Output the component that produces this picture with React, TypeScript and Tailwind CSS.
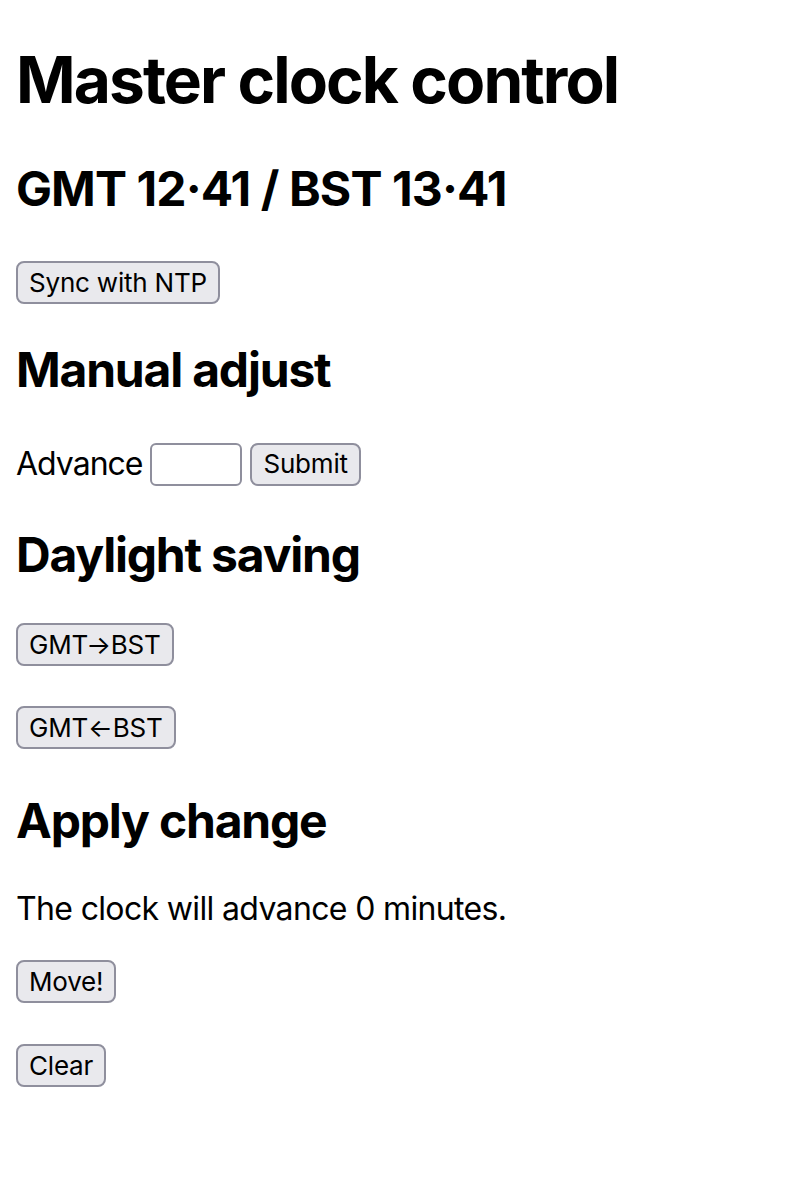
import React from 'react';

const font = { fontFamily: 'Inter, "Noto Sans", sans-serif' };

function Btn({ label, className = '' }: { label: string; className?: string }) {
  return (
    <button
      type="button"
      className={`h-[43px] px-[11px] border-2 border-[#8f8f9d] bg-[#e9e9ed] rounded-[8px] text-[26px] leading-none tracking-[-0.2px] text-black flex items-center ${className}`}
    >
      {label}
    </button>
  );
}

export default function App() {
  return (
    <div className="w-[800px] h-[1200px] bg-white text-black px-4 pt-[42px]" style={font}>
      <h1 className="text-[64px] leading-[76px] font-bold tracking-[-1.9px]">Master clock control</h1>
      <h2 className="mt-[42px] text-[48px] leading-[58px] font-bold tracking-[-0.9px]">GMT 12·41 / BST 13·41</h2>
      <div className="mt-[43px] flex">
        <Btn label="Sync with NTP" />
      </div>

      <h2 className="mt-[37px] text-[48px] leading-[58px] font-bold tracking-[-1.2px]">Manual adjust</h2>
      <div className="mt-[41px] flex items-center gap-[8px] text-[32px]">
        <span className="tracking-[-1px]">Advance</span>
        <input type="text" className="w-[92px] h-[43px] border-2 border-[#8f8f9d] rounded-[6px] bg-white" />
        <Btn label="Submit" />
      </div>

      <h2 className="mt-[38px] text-[48px] leading-[58px] font-bold tracking-[-1.2px]">Daylight saving</h2>
      <div className="mt-[39px] flex flex-col items-start gap-[40px]">
        <Btn label="GMT→BST" />
        <Btn label="GMT←BST" />
      </div>

      <h2 className="mt-[43px] text-[48px] leading-[58px] font-bold tracking-[-1.2px]">Apply change</h2>
      <p className="mt-[40px] text-[32px] leading-[38px] tracking-[-0.65px]">The clock will advance 0 minutes.</p>
      <div className="mt-[32px] flex flex-col items-start gap-[41px]">
        <Btn label="Move!" />
        <Btn label="Clear" />
      </div>
    </div>
  );
}
